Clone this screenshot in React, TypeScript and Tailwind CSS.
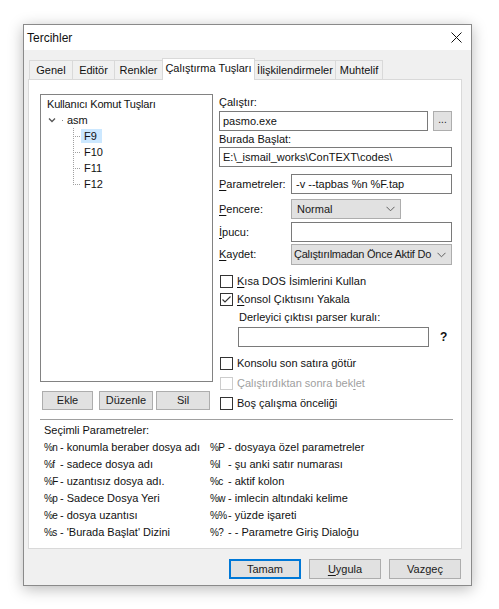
import React from "react";

function Ul({ children }: { children: React.ReactNode }) {
  return <span className="underline underline-offset-[2px] decoration-1">{children}</span>;
}

function Chevron() {
  return (
    <svg width="9" height="6" viewBox="0 0 9 6" className="shrink-0">
      <polyline points="0.5,0.8 4.5,4.8 8.5,0.8" fill="none" stroke="#606060" strokeWidth="1" />
    </svg>
  );
}

function Check({
  checked,
  disabled,
  children,
  className = "",
}: {
  checked?: boolean;
  disabled?: boolean;
  children: React.ReactNode;
  className?: string;
}) {
  return (
    <div className={`flex items-center pl-[1px] ${className}`}>
      <span
        className={`w-[13px] h-[13px] border bg-white flex items-center justify-center shrink-0 ${
          disabled ? "border-[#cccccc]" : "border-[#333333]"
        }`}
      >
        {checked && (
          <svg width="11" height="11" viewBox="0 0 11 11">
            <polyline points="1.5,5.5 4,8 9.5,2.5" fill="none" stroke="#333333" strokeWidth="1.1" />
          </svg>
        )}
      </span>
      <span className={`ml-[4px] ${disabled ? "text-[#a0a0a0]" : ""}`}>{children}</span>
    </div>
  );
}

function TreeChild({ label, last, selected }: { label: string; last?: boolean; selected?: boolean }) {
  return (
    <div className="h-[16px] flex items-center">
      <svg width="40" height="16" viewBox="0 0 40 16" className="shrink-0" shapeRendering="crispEdges">
        <line x1="32.5" y1="0" x2="32.5" y2={last ? 8.5 : 16} stroke="#a0a0a0" strokeDasharray="1 1" />
        <line x1="34" y1="8.5" x2="40" y2="8.5" stroke="#a0a0a0" strokeDasharray="1 1" />
      </svg>
      <span className={`h-[14px] pl-[3px] pr-[5px] flex items-center ${selected ? "bg-[#cce8ff]" : ""}`}>{label}</span>
    </div>
  );
}

const params1: [string, string][] = [
  ["%n", "- konumla beraber dosya adı"],
  ["%f", "- sadece dosya adı"],
  ["%F", "- uzantısız dosya adı."],
  ["%p", "- Sadece Dosya Yeri"],
  ["%e", "- dosya uzantısı"],
  ["%s", "- 'Burada Başlat' Dizini"],
];

const params2: [string, string][] = [
  ["%P", "- dosyaya özel parametreler"],
  ["%l", "- şu anki satır numarası"],
  ["%c", "- aktif kolon"],
  ["%w", "- imlecin altındaki kelime"],
  ["%%", "- yüzde işareti"],
  ["%?", "- - Parametre Giriş Dialoğu"],
];

const tabs = [
  { label: "Genel", w: "w-[44px]" },
  { label: "Editör", w: "w-[43px]" },
  { label: "Renkler", w: "w-[49px]" },
  { label: "Çalıştırma Tuşları", w: "w-[93px]", active: true },
  { label: "İlişkilendirmeler", w: "w-[82px]" },
  { label: "Muhtelif", w: "w-[48px]" },
];

const btn = "bg-[#e1e1e1] border border-[#adadad] text-[#1a1a1a]";

export default function App() {
  return (
    <div className="w-[499px] h-[609px] bg-white pt-[24px] pl-[23px] font-['Liberation_Sans',Arial,sans-serif] text-[11px] text-[#111] leading-none">
      <div className="w-[449px] h-[562px] border border-[#8a8a8a] shadow-[0_3px_14px_rgba(0,0,0,0.28)] flex flex-col">
        {/* title bar */}
        <div className="h-[25px] bg-white flex items-center justify-between pl-[3px] pr-[9px] shrink-0">
          <span className="text-[12px]">Tercihler</span>
          <svg width="11" height="11" viewBox="0 0 11 11">
            <line x1="0.5" y1="0.5" x2="10.5" y2="10.5" stroke="#111" strokeWidth="1" />
            <line x1="10.5" y1="0.5" x2="0.5" y2="10.5" stroke="#111" strokeWidth="1" />
          </svg>
        </div>

        <div className="flex-1 bg-[#f0f0f0] pl-[4px] pr-[9px] flex flex-col">
          {/* tabs */}
          <div className="mt-[8px] h-[21px] flex items-end pl-[1px] shrink-0">
            {tabs.map((t, i) =>
              t.active ? (
                <div
                  key={t.label}
                  className={`${t.w} -ml-px h-[22px] -mb-px relative z-10 bg-white border border-b-0 border-[#d9d9d9] flex items-center justify-center pb-[2px]`}
                >
                  {t.label}
                </div>
              ) : (
                <div
                  key={t.label}
                  className={`${t.w} ${i === 0 ? "" : "-ml-px"} h-[19px] bg-[#f0f0f0] border border-b-0 border-[#d9d9d9] flex items-center justify-center`}
                >
                  {t.label}
                </div>
              )
            )}
          </div>

          {/* panel */}
          <div className="h-[470px] bg-white border border-[#d9d9d9] pl-[11px] pt-[14px] shrink-0">
            <div className="h-[325px] flex">
              {/* left column */}
              <div className="w-[173px] flex flex-col">
                <div className="h-[288px] border border-[#828282] bg-white pt-[1px]">
                  <div className="h-[16px] flex items-center pl-[6px] tracking-[-0.2px]">Kullanıcı Komut Tuşları</div>
                  <div className="h-[16px] flex items-center pl-[6px]">
                    <svg width="20" height="16" viewBox="0 0 20 16" className="shrink-0">
                      <polyline points="2,6.5 5,9.5 8,6.5" fill="none" stroke="#555" strokeWidth="1.3" />
                      <rect x="15" y="8" width="1" height="1" fill="#888" />
                    </svg>
                    <span>asm</span>
                  </div>
                  <TreeChild label="F9" selected />
                  <TreeChild label="F10" />
                  <TreeChild label="F11" />
                  <TreeChild label="F12" last />
                </div>
                <div className="mt-[9px] h-[19px] flex">
                  <button className={`ml-[2px] w-[51px] h-full ${btn}`}>Ekle</button>
                  <button className={`ml-[6px] w-[54px] h-full ${btn}`}>Düzenle</button>
                  <button className={`ml-[3px] w-[54px] h-full ${btn}`}>Sil</button>
                </div>
              </div>

              {/* right column */}
              <div className="ml-[6px] w-[233px] flex flex-col">
                <div className="h-[17px] flex items-center">Çalıştır:</div>
                <div className="h-[20px] flex">
                  <div className="w-[209px] h-full border border-[#7a7a7a] bg-white flex items-center pl-[3px]">pasmo.exe</div>
                  <button className={`ml-[5px] w-[19px] h-full ${btn} flex items-end justify-center pb-[5px] text-[10px]`}>
                    ...
                  </button>
                </div>
                <div className="h-[16px] flex items-center">Burada Başlat:</div>
                <div className="h-[20px] border border-[#7a7a7a] bg-white flex items-center pl-[3px]">
                  E:\_ismail_works\ConTEXT\codes\
                </div>

                <div className="mt-[7px] h-[20px] flex">
                  <div className="w-[72px] flex items-center">
                    <Ul>P</Ul>arametreler:
                  </div>
                  <div className="flex-1 border border-[#7a7a7a] bg-white flex items-center pl-[4px]">-v --tapbas %n %F.tap</div>
                </div>

                <div className="mt-[5px] h-[20px] flex">
                  <div className="w-[72px] flex items-center">
                    <Ul>P</Ul>encere:
                  </div>
                  <div className={`w-[110px] ${btn} flex items-center justify-between pl-[5px] pr-[5px]`}>
                    <span>Normal</span>
                    <Chevron />
                  </div>
                </div>

                <div className="mt-[3px] h-[20px] flex">
                  <div className="w-[72px] flex items-center">
                    <Ul>İ</Ul>pucu:
                  </div>
                  <div className="flex-1 border border-[#7a7a7a] bg-white" />
                </div>

                <div className="mt-[2px] h-[21px] flex">
                  <div className="w-[72px] flex items-center">
                    <Ul>K</Ul>aydet:
                  </div>
                  <div className={`flex-1 ${btn} flex items-center justify-between pl-[2px] pr-[5px]`}>
                    <span className="whitespace-nowrap tracking-[-0.25px]">Çalıştırılmadan Önce Aktif Do</span>
                    <Chevron />
                  </div>
                </div>

                <Check className="mt-[7px] h-[18px]">
                  <Ul>K</Ul>ısa DOS İsimlerini Kullan
                </Check>
                <Check className="h-[18px]" checked>
                  <Ul>K</Ul>onsol Çıktısını Yakala
                </Check>
                <div className="h-[18px] flex items-center pl-[20px]">Derleyici çıktısı parser kuralı:</div>
                <div className="mt-[1px] h-[20px] flex items-center">
                  <div className="ml-[19px] w-[191px] h-full border border-[#7a7a7a] bg-white" />
                  <span className="ml-[11px] font-bold text-[12px]">?</span>
                </div>
                <Check className="mt-[6px] h-[20px]">Konsolu son satıra götür</Check>
                <Check className="h-[20px]" disabled>
                  Çalıştırdıktan sonra bek<Ul>l</Ul>et
                </Check>
                <Check className="h-[20px]">Boş çalışma önceliği</Check>
              </div>
            </div>

            <div className="w-[413px] h-px bg-[#a0a0a0]" />

            <div className="pt-[2px] pl-[4px]">
              <div className="h-[17px] flex items-center">Seçimli Parametreler:</div>
              <div className="flex">
                <div className="w-[166px]">
                  {params1.map(([c, d]) => (
                    <div key={c} className="h-[17px] flex items-center whitespace-nowrap">
                      <span className="w-[16px] shrink-0 text-[10px] tracking-[-0.6px]">{c}</span>
                      <span>{d}</span>
                    </div>
                  ))}
                </div>
                <div>
                  {params2.map(([c, d]) => (
                    <div key={c} className="h-[17px] flex items-center whitespace-nowrap">
                      <span className="w-[18px] shrink-0 text-[10px] tracking-[-0.6px]">{c}</span>
                      <span>{d}</span>
                    </div>
                  ))}
                </div>
              </div>
            </div>
          </div>

          {/* bottom buttons */}
          <div className="mt-[10px] h-[20px] flex justify-end gap-[8px] pr-[1px] shrink-0">
            <button className="w-[72px] h-full bg-[#e1e1e1] border-2 border-[#0078d7] text-[#1a1a1a]">Tamam</button>
            <button className={`w-[72px] h-full ${btn}`}>
              <Ul>U</Ul>ygula
            </button>
            <button className={`w-[72px] h-full ${btn}`}>Vazgeç</button>
          </div>
        </div>
      </div>
    </div>
  );
}
